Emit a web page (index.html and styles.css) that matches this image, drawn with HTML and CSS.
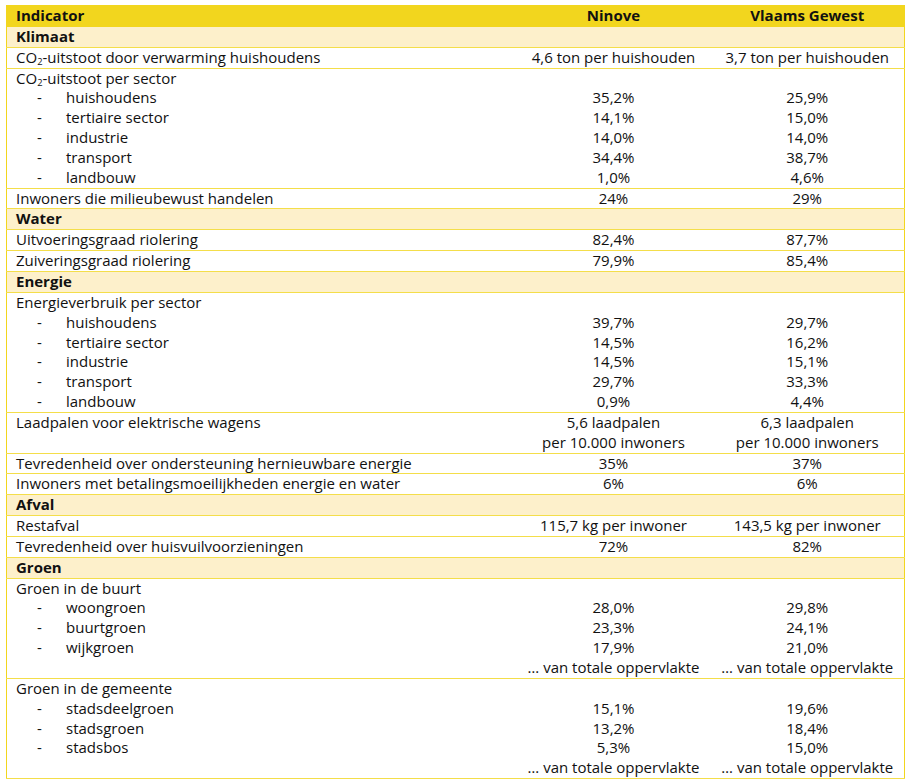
FILE: index.html
```html
<!DOCTYPE html>
<html lang="nl">
<head>
<meta charset="utf-8">
<title>Indicatoren Ninove</title>
<link rel="stylesheet" href="styles.css">
</head>
<body>
<div class="page">
<table class="ind">
  <colgroup><col class="c1"><col class="c2"><col class="c3"></colgroup>
  <thead>
    <tr class="head"><th class="lbl">Indicator</th><th>Ninove</th><th>Vlaams Gewest</th></tr>
  </thead>
  <tbody>
    <tr class="cat"><td colspan="3">Klimaat</td></tr>
    <tr><td class="lbl">CO<sub>2</sub>-uitstoot door verwarming huishoudens</td><td>4,6 ton per huishouden</td><td>3,7 ton per huishouden</td></tr>
    <tr><td class="lbl">CO<sub>2</sub>-uitstoot per sector<span class="sub">huishoudens</span><span class="sub">tertiaire sector</span><span class="sub">industrie</span><span class="sub">transport</span><span class="sub">landbouw</span></td>
      <td>&nbsp;<br>35,2%<br>14,1%<br>14,0%<br>34,4%<br>1,0%</td>
      <td>&nbsp;<br>25,9%<br>15,0%<br>14,0%<br>38,7%<br>4,6%</td></tr>
    <tr><td class="lbl">Inwoners die milieubewust handelen</td><td>24%</td><td>29%</td></tr>
    <tr class="cat"><td colspan="3">Water</td></tr>
    <tr><td class="lbl">Uitvoeringsgraad riolering</td><td>82,4%</td><td>87,7%</td></tr>
    <tr><td class="lbl">Zuiveringsgraad riolering</td><td>79,9%</td><td>85,4%</td></tr>
    <tr class="cat"><td colspan="3">Energie</td></tr>
    <tr><td class="lbl">Energieverbruik per sector<span class="sub">huishoudens</span><span class="sub">tertiaire sector</span><span class="sub">industrie</span><span class="sub">transport</span><span class="sub">landbouw</span></td>
      <td>&nbsp;<br>39,7%<br>14,5%<br>14,5%<br>29,7%<br>0,9%</td>
      <td>&nbsp;<br>29,7%<br>16,2%<br>15,1%<br>33,3%<br>4,4%</td></tr>
    <tr><td class="lbl">Laadpalen voor elektrische wagens<br>&nbsp;</td><td>5,6 laadpalen<br>per 10.000 inwoners</td><td>6,3 laadpalen<br>per 10.000 inwoners</td></tr>
    <tr><td class="lbl">Tevredenheid over ondersteuning hernieuwbare energie</td><td>35%</td><td>37%</td></tr>
    <tr><td class="lbl">Inwoners met betalingsmoeilijkheden energie en water</td><td>6%</td><td>6%</td></tr>
    <tr class="cat"><td colspan="3">Afval</td></tr>
    <tr><td class="lbl">Restafval</td><td>115,7 kg per inwoner</td><td>143,5 kg per inwoner</td></tr>
    <tr><td class="lbl">Tevredenheid over huisvuilvoorzieningen</td><td>72%</td><td>82%</td></tr>
    <tr class="cat"><td colspan="3">Groen</td></tr>
    <tr><td class="lbl">Groen in de buurt<span class="sub">woongroen</span><span class="sub">buurtgroen</span><span class="sub">wijkgroen</span><span class="blank">&nbsp;</span></td>
      <td>&nbsp;<br>28,0%<br>23,3%<br>17,9%<br>&hellip; van totale oppervlakte</td>
      <td>&nbsp;<br>29,8%<br>24,1%<br>21,0%<br>&hellip; van totale oppervlakte</td></tr>
    <tr><td class="lbl">Groen in de gemeente<span class="sub">stadsdeelgroen</span><span class="sub">stadsgroen</span><span class="sub">stadsbos</span><span class="blank">&nbsp;</span></td>
      <td>&nbsp;<br>15,1%<br>13,2%<br>5,3%<br>&hellip; van totale oppervlakte</td>
      <td>&nbsp;<br>19,6%<br>18,4%<br>15,0%<br>&hellip; van totale oppervlakte</td></tr>
  </tbody>
</table>
</div>
</body>
</html>
```

FILE: styles.css
```css
html, body {
  margin: 0;
  padding: 0;
  background: #ffffff;
}

.page {
  padding: 5px 0 0 6px;
}

.ind {
  width: 898px;
  border-collapse: collapse;
  table-layout: fixed;
  font-family: "Open Sans", "Noto Sans", sans-serif;
  font-size: 15px;
  line-height: 19.85px;
  color: #111111;
  border: 1px solid #f2d61e;
}

.c1 { width: 510px; }
.c2 { width: 194px; }
.c3 { width: 194px; }

.ind th,
.ind td {
  padding: 0;
  text-align: center;
  vertical-align: top;
  border-top: 1px solid #f4de4a;
  border-bottom: 1px solid #f4de4a;
  white-space: nowrap;
}

.ind .lbl {
  text-align: left;
  padding-left: 9px;
}

.head th {
  background: #f2d61e;
  font-weight: 700;
  border-color: #f2d61e;
}

.cat td {
  background: #fdf0cb;
  font-weight: 700;
  text-align: left;
  padding-left: 9px;
}

.sub {
  display: block;
  padding-left: 50px;
  position: relative;
}

.sub::before {
  content: "-";
  position: absolute;
  left: 21px;
}

.blank {
  display: block;
}

sub {
  font-size: 0.62em;
  line-height: 0;
  vertical-align: -0.25em;
}
```
